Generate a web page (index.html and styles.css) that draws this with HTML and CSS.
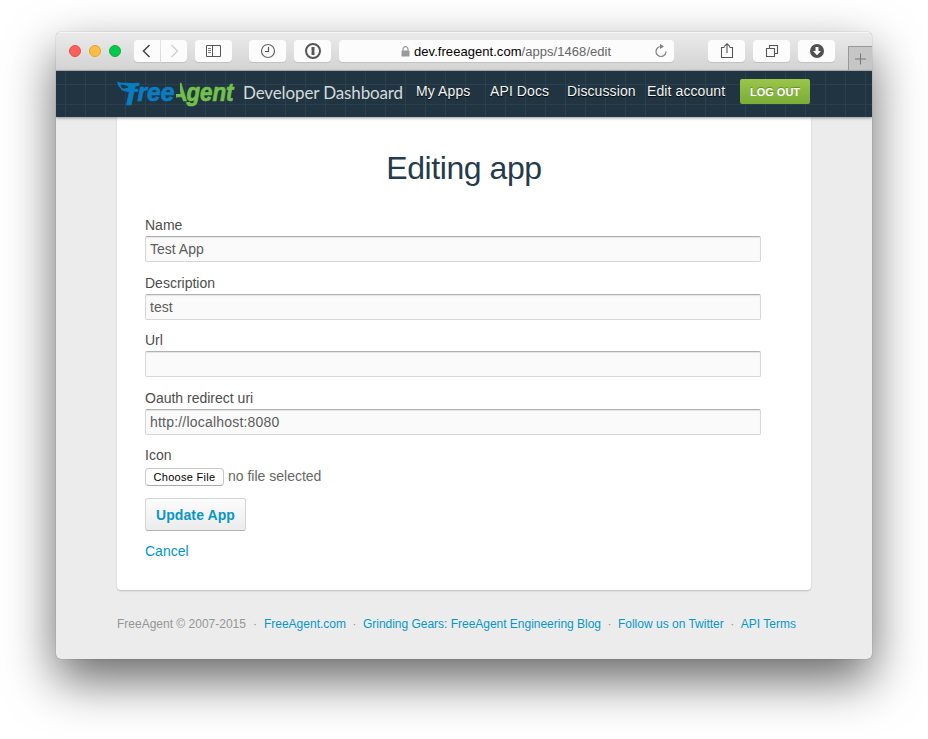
FILE: index.html
```html
<!DOCTYPE html>
<html lang="en">
<head>
<meta charset="utf-8">
<title>Developer Dashboard</title>
<link rel="stylesheet" href="styles.css">
</head>
<body>
<div class="window">
  <div class="toolbar">
    <div class="lights"><i class="light red"></i><i class="light amber"></i><i class="light green"></i></div>
    <div class="tool history"><svg width="26" height="22"><path d="M15.500 5 9.500 11l6 6" fill="none" stroke="#4a4a4a" stroke-width="1.600"/></svg></div>
    <div class="tool history forward"><svg width="26" height="22"><path d="m10.500 5 6 6-6 6" fill="none" stroke="#d0d0d0" stroke-width="1.400"/></svg></div>
    <div class="tool sidebar"><svg width="37" height="22"><g fill="none" stroke="#555"><path d="M11.500 5.500h14v11h-14zM17.500 5.500v11"/><path d="M13 8.500h3M13 10.500h3M13 12.500h3" stroke-width=".8"/></g></svg></div>
    <div class="tool clock"><svg width="37" height="22"><circle cx="19" cy="11" r="6.500" fill="none" stroke="#666" stroke-width="1.200"/><path d="M19.500 7v4.500H16" fill="none" stroke="#555" stroke-width="1.200"/></svg></div>
    <div class="tool password"><svg width="37" height="22"><circle cx="19" cy="11" r="7" fill="none" stroke="#555" stroke-width="2"/><path d="M17.500 7h3v3.500l-.5.500.5.500V15h-3v-3.500l.5-.5-.5-.5z" fill="#555"/></svg></div>
    <div class="address">
      <svg class="lock" width="9" height="11"><path d="M2 5V3.200a2.500 2.500 0 0 1 5 0V5" fill="none" stroke="#999" stroke-width="1.200"/><rect x=".5" y="4.500" width="8" height="6" rx=".6" fill="#999"/></svg>
      <span class="url">dev.freeagent.com<span class="path">/apps/1468/edit</span></span>
      <svg class="reload" width="14" height="14"><path d="M8 2.500H7a5 5 0 1 0 5 5" fill="none" stroke="#808080" stroke-width="1.200"/><path d="m6 0 4 2.600L6 5z" fill="#808080"/></svg>
    </div>
    <div class="tool share"><svg width="37" height="22"><path d="M16.500 7.500h-3v10h11v-10h-3M19 13V4M16 6.700l3-3 3 3" fill="none" stroke="#555" stroke-width="1.100"/></svg></div>
    <div class="tool tabs"><svg width="37" height="22"><path d="M13.500 8.500h8v8h-8zM16.500 8V5.500h8v8H22" fill="none" stroke="#555" stroke-width="1.100"/></svg></div>
    <div class="tool downloads"><svg width="37" height="22"><circle cx="19" cy="11" r="7" fill="#505050"/><path d="M17.500 7h3v4H23l-4 4.200L15 11h2.500z" fill="#fff"/></svg></div>
    <div class="newtab"><svg width="23" height="24"><path d="M6 12h11M11.500 6.500v11" fill="none" stroke="#777"/></svg></div>
  </div>
  <header class="header">
    <svg class="logo" width="120" height="34" viewBox="0 0 120 34">
      <path d="M.3 1.500C5 4 11 1.500 17 3.500l-3 5.500C10 12 4.500 12 3.500 8 1.300 6.500.3 4 .3 1.500zM3.500 4.500c.5 1.500 1 2.500 1.500 3.500 2 1 4.500.5 6.500-1-2-2-5-2-8-2.500z" fill="#0a7cc2" fill-rule="evenodd"/>
      <g class="logo-text">
        <text class="logo-f" x="8.500" y="24.500" textLength="11" lengthAdjust="spacingAndGlyphs">f</text>
        <text class="logo-blue" x="20.500" y="20.500" textLength="37" lengthAdjust="spacingAndGlyphs">ree</text>
        <clipPath id="leg"><path d="M63 0h10v24h-7l-1-5.500h-6V14h4z"/></clipPath>
        <text class="logo-a" x="54" y="20.500" textLength="16" lengthAdjust="spacingAndGlyphs" clip-path="url(#leg)">A</text>
        <text class="logo-green" x="69.500" y="20.500" textLength="47" lengthAdjust="spacingAndGlyphs">gent</text>
      </g>
    </svg>
    <span class="brand">Developer Dashboard</span>
    <nav class="nav"><a>My Apps</a><a>API Docs</a><a>Discussion</a><a>Edit account</a></nav>
    <a class="logout">LOG OUT</a>
  </header>
  <main class="panel">
    <h1>Editing app</h1>
    <form>
      <div class="field"><label for="name">Name</label><input id="name" value="Test App"></div>
      <div class="field"><label for="description">Description</label><input id="description" value="test"></div>
      <div class="field"><label for="url">Url</label><input id="url"></div>
      <div class="field"><label for="redirect">Oauth redirect uri</label><input id="redirect" class="wide" value="http://localhost:8080"></div>
      <label>Icon</label>
      <div class="file"><button type="button" class="choose">Choose File</button><span>no file selected</span></div>
      <button type="button" class="update">Update App</button>
      <a class="cancel">Cancel</a>
    </form>
  </main>
  <footer class="footer"><span>FreeAgent © 2007-2015</span><i class="first">·</i><a>FreeAgent.com</a><i>·</i><a class="blog">Grinding Gears: FreeAgent Engineering Blog</a><i>·</i><a>Follow us on Twitter</a><i>·</i><a>API Terms</a></footer>
</div>
</body>
</html>
```
FILE: styles.css
```css
* { box-sizing: border-box; }
body {
  margin: 0;
  height: 739px;
  overflow: hidden;
  padding: 32px 56px 0;
  background: #fff;
  font: 14px/20px "Liberation Sans", Arial, sans-serif;
  color: #4d4d4d;
}
.window {
  width: 816px;
  height: 627px;
  overflow: hidden;
  border-radius: 5px;
  background: #ececec;
  box-shadow: 0 0 1px rgba(0,0,0,.5), 0 21px 50px rgba(0,0,0,.6);
}
.toolbar {
  height: 39px;
  display: flex;
  align-items: flex-start;
  padding: 8px 0 0 13px;
  background: linear-gradient(#ebebeb, #d3d3d3);
  border-bottom: 1px solid #b5b5b5;
  box-shadow: inset 0 1px #f6f6f6;
}
.lights { display: flex; gap: 8px; margin: 5px 13px 0 0; }
.light { width: 12px; height: 12px; border-radius: 50%; border: 1px solid; }
.red { background: #ff5f5b; border-color: #e2504c; }
.amber { background: #ffbd42; border-color: #e0a03a; }
.green { background: #00ca4e; border-color: #0fae3b; }
.tool {
  width: 37px;
  height: 22px;
  flex: none;
  border-radius: 4px;
  background: #fcfcfc;
  box-shadow: 0 1px #c2c2c2;
}
.tool svg, .newtab svg { display: block; }
.history { width: 26px; border-radius: 4px 0 0 4px; }
.forward { margin-left: 1px; border-radius: 0 4px 4px 0; }
.sidebar { margin-left: 8px; }
.clock { margin-left: 17px; }
.password, .address { margin-left: 8px; }
.address {
  width: 335px;
  height: 22px;
  display: flex;
  align-items: center;
  padding: 0 6px 0 62px;
  border-radius: 4px;
  background: #fcfcfc;
  box-shadow: 0 1px #c2c2c2;
}
.url { margin: 1px 0 0 4px; font-size: 13px; letter-spacing: .05px; color: #000; white-space: nowrap; }
.path { color: #666; }
.reload { margin-left: auto; margin-bottom: 1px; }
.share { margin-left: 34px; }
.tabs, .downloads { margin-left: 8px; }
.newtab {
  width: 24px;
  height: 24px;
  margin: 6px 0 0 13px;
  background: #c6c6c6;
  border: solid #999;
  border-width: 1px 0 0 1px;
}
.header {
  position: relative;
  height: 46px;
  display: flex;
  align-items: flex-start;
  padding-left: 61px;
  background:
    linear-gradient(90deg, transparent 9px, #2b404d 9px, #2b404d 10px, transparent 10px) 0 0 / 20px 20px,
    linear-gradient(transparent 13px, #2b404d 13px, #2b404d 14px, transparent 14px) 0 0 / 20px 20px,
    #203541;
  box-shadow: 0 1px 3px rgba(0,0,0,.4);
}
.logo { margin-top: 9px; flex: none; overflow: visible; }
.logo-text { font: italic bold 25px "Liberation Sans", sans-serif; stroke-width: .7px; }
.logo-f { fill: #0a7cc2; stroke: #0a7cc2; font-size: 30px; }
.logo-blue { fill: #0a7cc2; stroke: #0a7cc2; }
.logo-a { fill: #73c04b; stroke: #73c04b; font-style: normal; }
.logo-green { fill: #73c04b; stroke: #73c04b; }
.brand {
  width: 173px;
  margin: 11px 0 0 6px;
  font: 17px/22px Lato, sans-serif;
  letter-spacing: -.13px;
  color: #d5dade;
  white-space: nowrap;
}
.nav {
  display: grid;
  grid-template-columns: 74px 77px 80px 93px;
  margin-top: 10px;
  color: #f4f5f6;
  white-space: nowrap;
  text-shadow: 0 1px 1px #000;
  letter-spacing: .1px;
}
.logout {
  width: 70px;
  height: 25px;
  margin-top: 8px;
  border-radius: 2px;
  background: linear-gradient(#9ac549, #7bad38);
  color: #fff;
  font: bold 11px/26px "Liberation Sans", Arial, sans-serif;
  text-align: center;
  text-shadow: 0 -1px 1px rgba(0,0,0,.3);
}
.panel {
  width: 694px;
  height: 473px;
  margin-left: 61px;
  padding: 31px 28px 0;
  border-radius: 0 0 4px 4px;
  background: #fff;
  box-shadow: 0 1px 2px rgba(0,0,0,.2);
}
h1 {
  margin: 0 0 27px;
  font-size: 32px;
  line-height: 40px;
  font-weight: 300;
  letter-spacing: -.42px;
  color: #253b4c;
  text-align: center;
}
.field { height: 57.5px; }
label { display: block; height: 21px; }
input {
  display: block;
  width: 616px;
  height: 26px;
  padding: 0 4px;
  border: 1px solid #d7d7d7;
  border-top-color: #b0b0b0;
  border-radius: 2px;
  background: #fafafa;
  box-shadow: inset 0 1px 1px #e4e4e4;
  font: inherit;
  color: #5c5c5c;
}
.wide { letter-spacing: .2px; }
.file { display: flex; align-items: center; height: 20px; color: #666; }
.choose {
  width: 79px;
  height: 18px;
  margin: 1px 4px 0 0;
  padding: 0;
  border: 1px solid #c8c8c8;
  border-bottom-color: #aaa;
  border-radius: 4px;
  background: #fff;
  font: 11px/16px "Liberation Sans", Arial, sans-serif;
  letter-spacing: .3px;
  color: #000;
}
.update {
  display: block;
  width: 101px;
  height: 33px;
  margin-top: 12px;
  padding: 0;
  border: 1px solid #d4d4d4;
  border-bottom-color: #b0b0b0;
  border-radius: 3px;
  background: linear-gradient(#fcfcfc, #ececec);
  font: bold 14px/20px "Liberation Sans", Arial, sans-serif;
  letter-spacing: .1px;
  color: #0797c5;
}
.cancel { display: block; margin-top: 10px; color: #0095c4; }
.footer {
  display: flex;
  margin: 24px 0 0 61px;
  font-size: 12px;
  color: #969696;
  white-space: nowrap;
}
.footer a { color: #0797c5; }
.footer i { width: 17px; text-align: center; font-style: normal; }
.footer .first { width: 18px; }
.footer .blog { letter-spacing: -.02px; }
```
